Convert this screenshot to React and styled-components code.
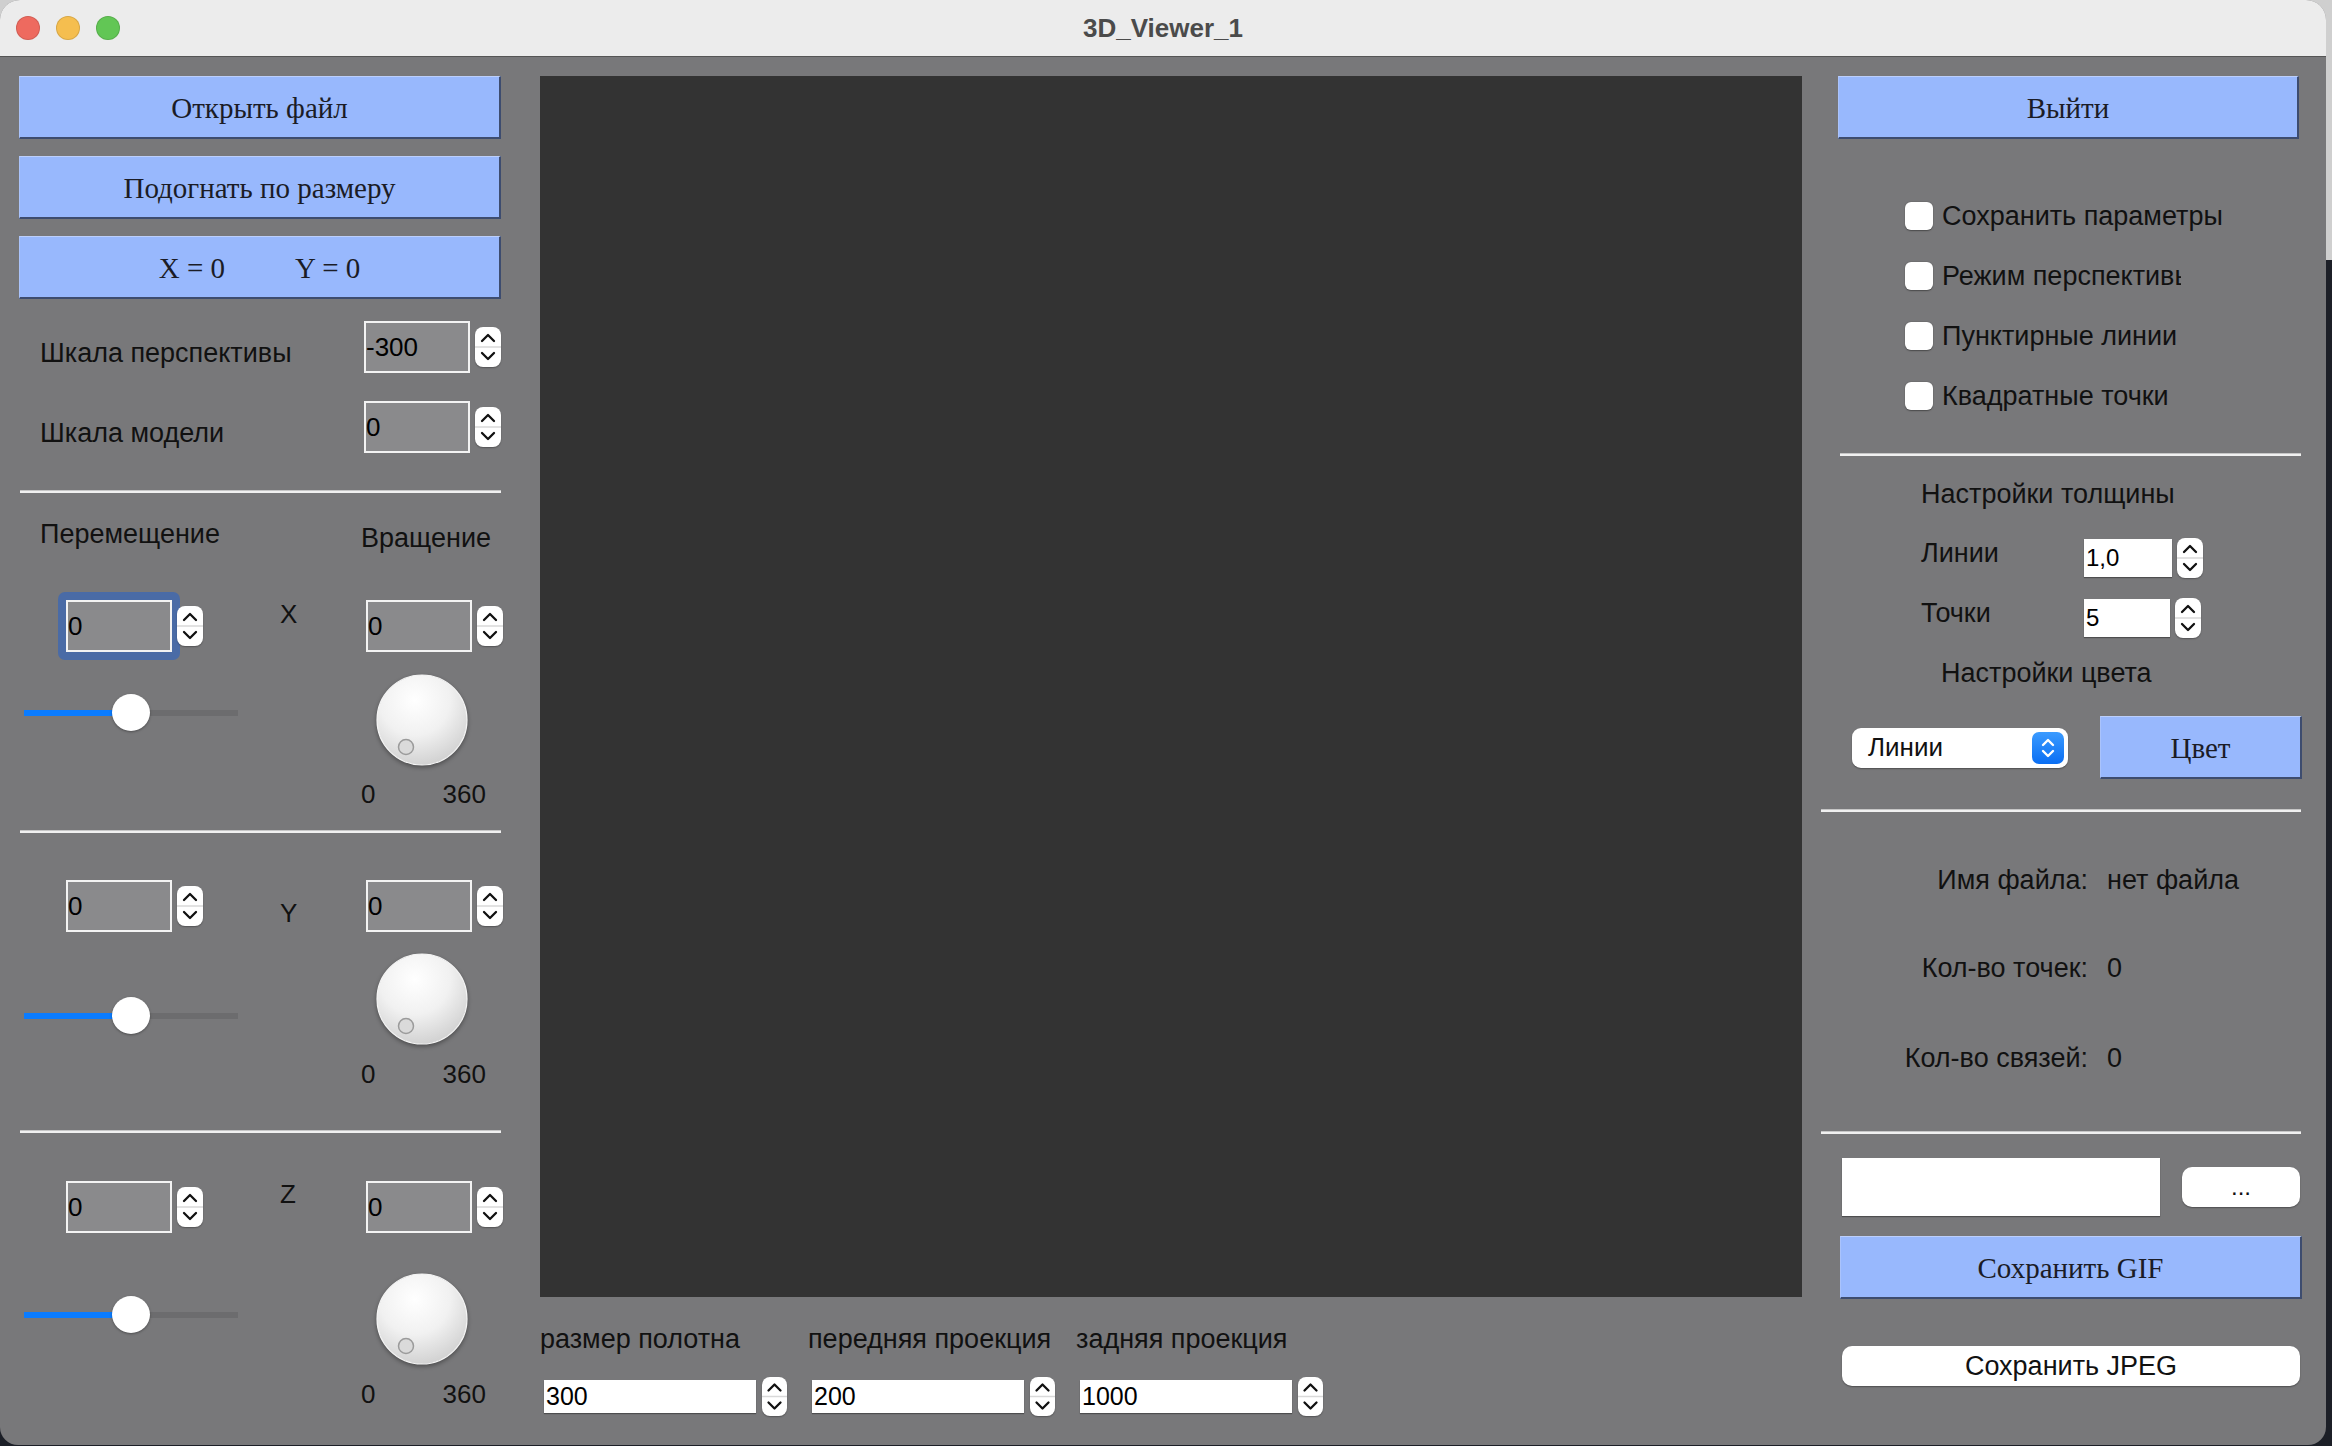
import React from 'react';
import styled, { createGlobalStyle } from 'styled-components';

const GlobalStyle = createGlobalStyle`
  html, body { margin: 0; padding: 0; }
  body {
    width: 2332px; height: 1446px; overflow: hidden;
    background: linear-gradient(#cfcfcf 0 260px, #1c1f27 260px);
    font-family: "Liberation Sans", Arial, sans-serif;
  }
  #root { display: flex; }
`;

const Window = styled.div`
  width: 2326px; height: 1445px; flex: none;
  background: #78787a;
  border-radius: 20px 20px 18px 18px;
  overflow: hidden;
  display: flex; flex-direction: column;
`;

const TitleBar = styled.div`
  height: 56px; flex: none;
  background: #ececec;
  border-bottom: 1px solid #555;
  display: grid; grid-template-columns: 1fr auto 1fr; align-items: center;
`;

const Lights = styled.div`
  display: flex; gap: 16px; padding-left: 16px;
`;

const Light = styled.span`
  width: 24px; height: 24px; border-radius: 50%;
  background: ${p => p.$c};
  box-shadow: inset 0 0 0 1px rgba(0,0,0,0.12);
`;

const Title = styled.div`
  font-weight: bold; font-size: 26px; color: #4b4b4b; padding-top: 1px;
`;

const Main = styled.div`
  display: flex; padding-top: 19px; flex: 1;
`;

const LeftPanel = styled.div`
  width: 482px; margin-left: 19px; flex: none;
  display: flex; flex-direction: column;
`;

const CenterColumn = styled.div`
  width: 1262px; margin-left: 39px; flex: none;
  display: flex; flex-direction: column;
`;

const RightPanel = styled.div`
  width: 482px; margin-left: 18px; flex: none;
  display: flex; flex-direction: column;
`;

const BlueButton = styled.div`
  box-sizing: border-box; flex: none;
  height: 63px;
  width: ${p => (p.$w ? `${p.$w}px` : 'auto')};
  margin-top: ${p => p.$mt || 0}px;
  margin-left: ${p => p.$ml || 0}px;
  background: #98b8fd;
  border: 1px solid #3d4c6f;
  border-top-color: #bccffb; border-left-color: #aac3fb;
  border-right-width: 2px; border-bottom-width: 2px;
  display: flex; align-items: center; justify-content: center; gap: 70px;
  padding-top: 3px;
  font-family: "Liberation Serif", "Times New Roman", serif;
  font-size: 29px; color: #1b1c26;
`;

const Label = styled.div`
  flex: none; box-sizing: border-box;
  font-size: ${p => p.$fs || 27}px; line-height: 30px; color: #111;
  white-space: nowrap;
  margin-top: ${p => p.$mt || 0}px;
  padding-left: ${p => p.$pl || 0}px;
  width: ${p => (p.$w ? `${p.$w}px` : 'auto')};
`;

const ScaleRow = styled.div`
  display: flex; justify-content: space-between; align-items: flex-start;
  height: 52px; flex: none;
  margin-top: ${p => p.$mt}px;
`;

const SpinWrap = styled.div`
  display: flex; align-items: center; flex: none;
  gap: ${p => (p.$gap ?? 5)}px;
  margin-left: ${p => p.$ml || 0}px;
  margin-top: ${p => p.$mt || 0}px;
  align-self: flex-start;
`;

const Field = styled.div`
  box-sizing: border-box; flex: none;
  width: ${p => p.$w}px; height: ${p => p.$h}px;
  background: ${p => (p.$gray ? '#8a8a8c' : '#fff')};
  border: ${p => (p.$gray ? '2px solid #f3f3f3' : 'none')};
  box-shadow: ${p => (p.$gray ? 'none' : '0 1px 1px rgba(0,0,0,0.35)')};
  display: flex; align-items: center;
  padding-left: ${p => (p.$gray ? 0 : 2)}px;
  font-size: ${p => p.$fs}px; color: #000;
`;

const FocusRing = styled.div`
  display: flex; padding: 8px; margin: -8px;
  border-radius: 7px; background: #4a6ba6;
`;

const StepperBox = styled.div`
  flex: none; position: relative;
  width: ${p => p.$w || 26}px; height: ${p => p.$h || 40}px;
  background: #fff; border-radius: 8px;
  box-shadow: 0 1px 1.5px rgba(0,0,0,0.3);
  display: flex;
`;

const Stepper = ({ w = 26, h = 40 }) => (
  <StepperBox $w={w} $h={h}>
    <svg width={w} height={h} viewBox={`0 0 ${w} ${h}`}>
      <line x1="0" y1={h / 2} x2={w} y2={h / 2} stroke="#d9d9d9" strokeWidth="1.5" />
      <polyline points={`${w / 2 - 6},${h / 2 - 6} ${w / 2},${h / 2 - 12} ${w / 2 + 6},${h / 2 - 6}`}
        fill="none" stroke="#111" strokeWidth="2.3" strokeLinecap="round" strokeLinejoin="round" />
      <polyline points={`${w / 2 - 6},${h / 2 + 6} ${w / 2},${h / 2 + 12} ${w / 2 + 6},${h / 2 + 6}`}
        fill="none" stroke="#111" strokeWidth="2.3" strokeLinecap="round" strokeLinejoin="round" />
    </svg>
  </StepperBox>
);

const SpinBox = ({ value, w, h, fs, gray, focus, gap, ml, mt, sw, sh }) => {
  const field = <Field $w={w} $h={h} $fs={fs} $gray={gray}>{value}</Field>;
  return (
    <SpinWrap $gap={gap} $ml={ml} $mt={mt}>
      {focus ? <FocusRing>{field}</FocusRing> : field}
      <Stepper w={sw} h={sh} />
    </SpinWrap>
  );
};

const Separator = styled.div`
  flex: none; height: 3px;
  background: linear-gradient(#c6c6c6 0 1px, #f0f0f0 1px);
  margin-top: ${p => p.$mt}px;
  margin-left: ${p => p.$ml || 0}px;
  width: ${p => p.$w}px;
`;

const HeaderRow = styled.div`
  display: flex; align-items: flex-start; flex: none;
  margin-top: 26px;
`;

const AxisBlock = styled.div`
  display: flex; align-items: flex-start; flex: none;
  margin-top: ${p => p.$mt}px;
`;

const AxisLeft = styled.div`
  width: 240px; flex: none; display: flex; flex-direction: column;
`;

const AxisLetter = styled.div`
  width: 102px; flex: none; box-sizing: border-box; padding-left: 21px;
  font-size: 26px; line-height: 30px; color: #111;
  margin-top: ${p => p.$mt}px;
`;

const AxisRight = styled.div`
  display: flex; flex-direction: column; flex: none;
`;

const Slider = styled.div`
  position: relative; flex: none;
  width: 214px; height: 38px;
  margin-top: ${p => p.$mt}px; margin-left: 5px;
  background: linear-gradient(to right, #0b7cff 0 ${p => p.$pct}%, #6c6c6e ${p => p.$pct}% 100%);
  background-size: 100% 6px; background-position: center; background-repeat: no-repeat;
  border-radius: 3px;
`;

const Handle = styled.span`
  position: absolute; top: 0;
  left: calc(${p => p.$pct}% - 19px);
  width: 38px; height: 37px; border-radius: 50%;
  background: #fff;
  box-shadow: 0 1px 2.5px rgba(0,0,0,0.35);
`;

const DialSvg = styled.svg`
  flex: none; display: block;
  margin-top: ${p => p.$mt}px; margin-left: 15px;
  filter: drop-shadow(0 2px 2px rgba(0,0,0,0.35));
`;

const Dial = ({ mt }) => (
  <DialSvg $mt={mt} width="92" height="92" viewBox="0 0 92 92">
    <defs>
      <radialGradient id="dialFace" cx="42%" cy="28%" r="78%">
        <stop offset="0" stopColor="#ffffff" />
        <stop offset="0.5" stopColor="#f1f1f1" />
        <stop offset="1" stopColor="#cdcdcd" />
      </radialGradient>
    </defs>
    <circle cx="46" cy="46" r="45" fill="url(#dialFace)" stroke="#f4f4f4" strokeWidth="1.2" />
    <circle cx="30" cy="73" r="7.5" fill="#dadada" stroke="#9b9b9b" strokeWidth="1.5" />
  </DialSvg>
);

const DialScale = styled.div`
  width: 125px; display: flex; justify-content: space-between;
  font-size: 26px; line-height: 30px; color: #111;
  margin-top: ${p => p.$mt}px;
`;

const Canvas = styled.div`
  width: 1262px; height: 1221px; flex: none; background: #333333;
`;

const BottomBar = styled.div`
  display: flex; margin-top: 27px;
`;

const ParamGroup = styled.div`
  width: 268px; flex: none; display: flex; flex-direction: column;
`;

const CheckList = styled.div`
  display: flex; flex-direction: column; gap: 32px;
  margin-top: 63px; padding-left: 85px;
`;

const CheckRow = styled.div`
  display: flex; align-items: center; gap: 9px; height: 28px;
`;

const CheckBox = styled.span`
  flex: none; width: 28px; height: 28px; border-radius: 6px;
  background: #fff; box-shadow: 0 0.5px 1.5px rgba(0,0,0,0.4);
`;

const CheckText = styled.span`
  font-size: 27px; color: #111; white-space: nowrap; overflow: hidden;
  ${p => (p.$clip ? `width: ${p.$clip}px;` : '')}
`;

const ParamRow = styled.div`
  display: flex; align-items: flex-start; flex: none;
  margin-top: ${p => p.$mt}px;
`;

const ColorRow = styled.div`
  display: flex; align-items: center; flex: none;
  margin-top: 28px;
`;

const Combo = styled.div`
  box-sizing: border-box; flex: none;
  width: 216px; height: 40px; margin-left: 32px;
  background: #fff; border-radius: 9px;
  box-shadow: 0 1px 1.5px rgba(0,0,0,0.35);
  display: flex; align-items: center; justify-content: space-between;
  padding: 0 4px 0 16px;
  font-size: 26px; color: #111;
`;

const ComboArrows = styled.span`
  width: 32px; height: 32px; border-radius: 7px;
  background: linear-gradient(#3b9bff, #0a6ef3);
  display: flex; align-items: center; justify-content: center;
`;

const StatRow = styled.div`
  display: flex; flex: none;
  margin-top: ${p => p.$mt}px;
  font-size: 27px; line-height: 30px; color: #111;
`;

const StatKey = styled.span`
  width: 268px; flex: none; text-align: right;
`;

const StatVal = styled.span`
  margin-left: 19px;
`;

const FileRow = styled.div`
  display: flex; align-items: center; flex: none;
  margin-top: 24px;
`;

const PathInput = styled.div`
  width: 318px; height: 58px; flex: none; margin-left: 22px;
  background: #fff; box-shadow: 0 1px 1px rgba(0,0,0,0.35);
`;

const WhiteButton = styled.div`
  box-sizing: border-box; flex: none;
  width: ${p => p.$w}px; height: 40px;
  margin-left: 22px; margin-top: ${p => p.$mt || 0}px;
  background: #fff; border-radius: 10px;
  box-shadow: 0 1px 1.5px rgba(0,0,0,0.35);
  display: flex; align-items: center; justify-content: center;
  font-size: ${p => p.$fs || 27}px; color: #111;
`;

const axes = [
  { letter: 'X', mt: 47, letterMt: -1, focus: true, sliderMt: 42, dialMt: 22, scaleMt: 13 },
  { letter: 'Y', mt: 47, letterMt: 18, focus: false, sliderMt: 65, dialMt: 21, scaleMt: 14 },
  { letter: 'Z', mt: 48, letterMt: -2, focus: false, sliderMt: 63, dialMt: 40, scaleMt: 14 },
];

const separatorsAfter = [21, 41];

const AxisSection = ({ a }) => (
  <AxisBlock $mt={a.mt}>
    <AxisLeft>
      <SpinBox value="0" w={106} h={52} fs={26} gray focus={a.focus} ml={47} />
      <Slider $mt={a.sliderMt} $pct={50}>
        <Handle $pct={50} />
      </Slider>
    </AxisLeft>
    <AxisLetter $mt={a.letterMt}>{a.letter}</AxisLetter>
    <AxisRight>
      <SpinBox value="0" w={106} h={52} fs={26} gray ml={5} />
      <Dial mt={a.dialMt} />
      <DialScale $mt={a.scaleMt}><span>0</span><span>360</span></DialScale>
    </AxisRight>
  </AxisBlock>
);

export default function App() {
  return (
    <>
      <GlobalStyle />
      <Window>
        <TitleBar>
          <Lights>
            <Light $c="#ee6a5f" />
            <Light $c="#f5be4f" />
            <Light $c="#62c655" />
          </Lights>
          <Title>3D_Viewer_1</Title>
          <span />
        </TitleBar>
        <Main>
          <LeftPanel>
            <BlueButton>Открыть файл</BlueButton>
            <BlueButton $mt={17}>Подогнать по размеру</BlueButton>
            <BlueButton $mt={17}><span>X = 0</span><span>Y = 0</span></BlueButton>
            <ScaleRow $mt={22}>
              <Label $pl={21} $mt={17}>Шкала перспективы</Label>
              <SpinBox value="-300" w={106} h={52} fs={26} gray />
            </ScaleRow>
            <ScaleRow $mt={28}>
              <Label $pl={21} $mt={17}>Шкала модели</Label>
              <SpinBox value="0" w={106} h={52} fs={26} gray />
            </ScaleRow>
            <Separator $mt={37} $ml={1} $w={481} />
            <HeaderRow>
              <Label $pl={21} $w={342}>Перемещение</Label>
              <Label $mt={4}>Вращение</Label>
            </HeaderRow>
            {axes.map((a, i) => (
              <React.Fragment key={a.letter}>
                <AxisSection a={a} />
                {i < 2 && <Separator $mt={separatorsAfter[i]} $ml={1} $w={481} />}
              </React.Fragment>
            ))}
          </LeftPanel>

          <CenterColumn>
            <Canvas />
            <BottomBar>
              {[
                ['размер полотна', '300'],
                ['передняя проекция', '200'],
                ['задняя проекция', '1000'],
              ].map(([t, v]) => (
                <ParamGroup key={t}>
                  <Label $fs={27}>{t}</Label>
                  <SpinBox value={v} w={212} h={33} fs={25} gap={6} ml={4} mt={23} sw={25} sh={39} />
                </ParamGroup>
              ))}
            </BottomBar>
          </CenterColumn>

          <RightPanel>
            <BlueButton $ml={18} $w={461}>Выйти</BlueButton>
            <CheckList>
              <CheckRow><CheckBox /><CheckText>Сохранить параметры</CheckText></CheckRow>
              <CheckRow><CheckBox /><CheckText $clip={239}>Режим перспективы</CheckText></CheckRow>
              <CheckRow><CheckBox /><CheckText>Пунктирные линии</CheckText></CheckRow>
              <CheckRow><CheckBox /><CheckText>Квадратные точки</CheckText></CheckRow>
            </CheckList>
            <Separator $mt={43} $ml={20} $w={461} />
            <Label $mt={23} $pl={101}>Настройки толщины</Label>
            <ParamRow $mt={29}>
              <Label $pl={101} $w={264}>Линии</Label>
              <SpinBox value="1,0" w={88} h={38} fs={24} />
            </ParamRow>
            <ParamRow $mt={20}>
              <Label $pl={101} $w={264}>Точки</Label>
              <SpinBox value="5" w={86} h={38} fs={24} />
            </ParamRow>
            <Label $mt={20} $pl={121}>Настройки цвета</Label>
            <ColorRow>
              <Combo>
                <span>Линии</span>
                <ComboArrows>
                  <svg width="18" height="24" viewBox="0 0 18 24">
                    <polyline points="4,9 9,4 14,9" fill="none" stroke="#fff" strokeWidth="2.4" strokeLinecap="round" strokeLinejoin="round" />
                    <polyline points="4,15 9,20 14,15" fill="none" stroke="#fff" strokeWidth="2.4" strokeLinecap="round" strokeLinejoin="round" />
                  </svg>
                </ComboArrows>
              </Combo>
              <BlueButton $ml={32} $w={202}>Цвет</BlueButton>
            </ColorRow>
            <Separator $mt={30} $ml={1} $w={480} />
            <StatRow $mt={53}><StatKey>Имя файла:</StatKey><StatVal>нет файла</StatVal></StatRow>
            <StatRow $mt={58}><StatKey>Кол-во точек:</StatKey><StatVal>0</StatVal></StatRow>
            <StatRow $mt={60}><StatKey>Кол-во связей:</StatKey><StatVal>0</StatVal></StatRow>
            <Separator $mt={58} $ml={1} $w={480} />
            <FileRow>
              <PathInput />
              <WhiteButton $w={118} $fs={24}>...</WhiteButton>
            </FileRow>
            <BlueButton $mt={20} $ml={20} $w={462}>Сохранить GIF</BlueButton>
            <WhiteButton $mt={47} $w={458}>Сохранить JPEG</WhiteButton>
          </RightPanel>
        </Main>
      </Window>
    </>
  );
}
